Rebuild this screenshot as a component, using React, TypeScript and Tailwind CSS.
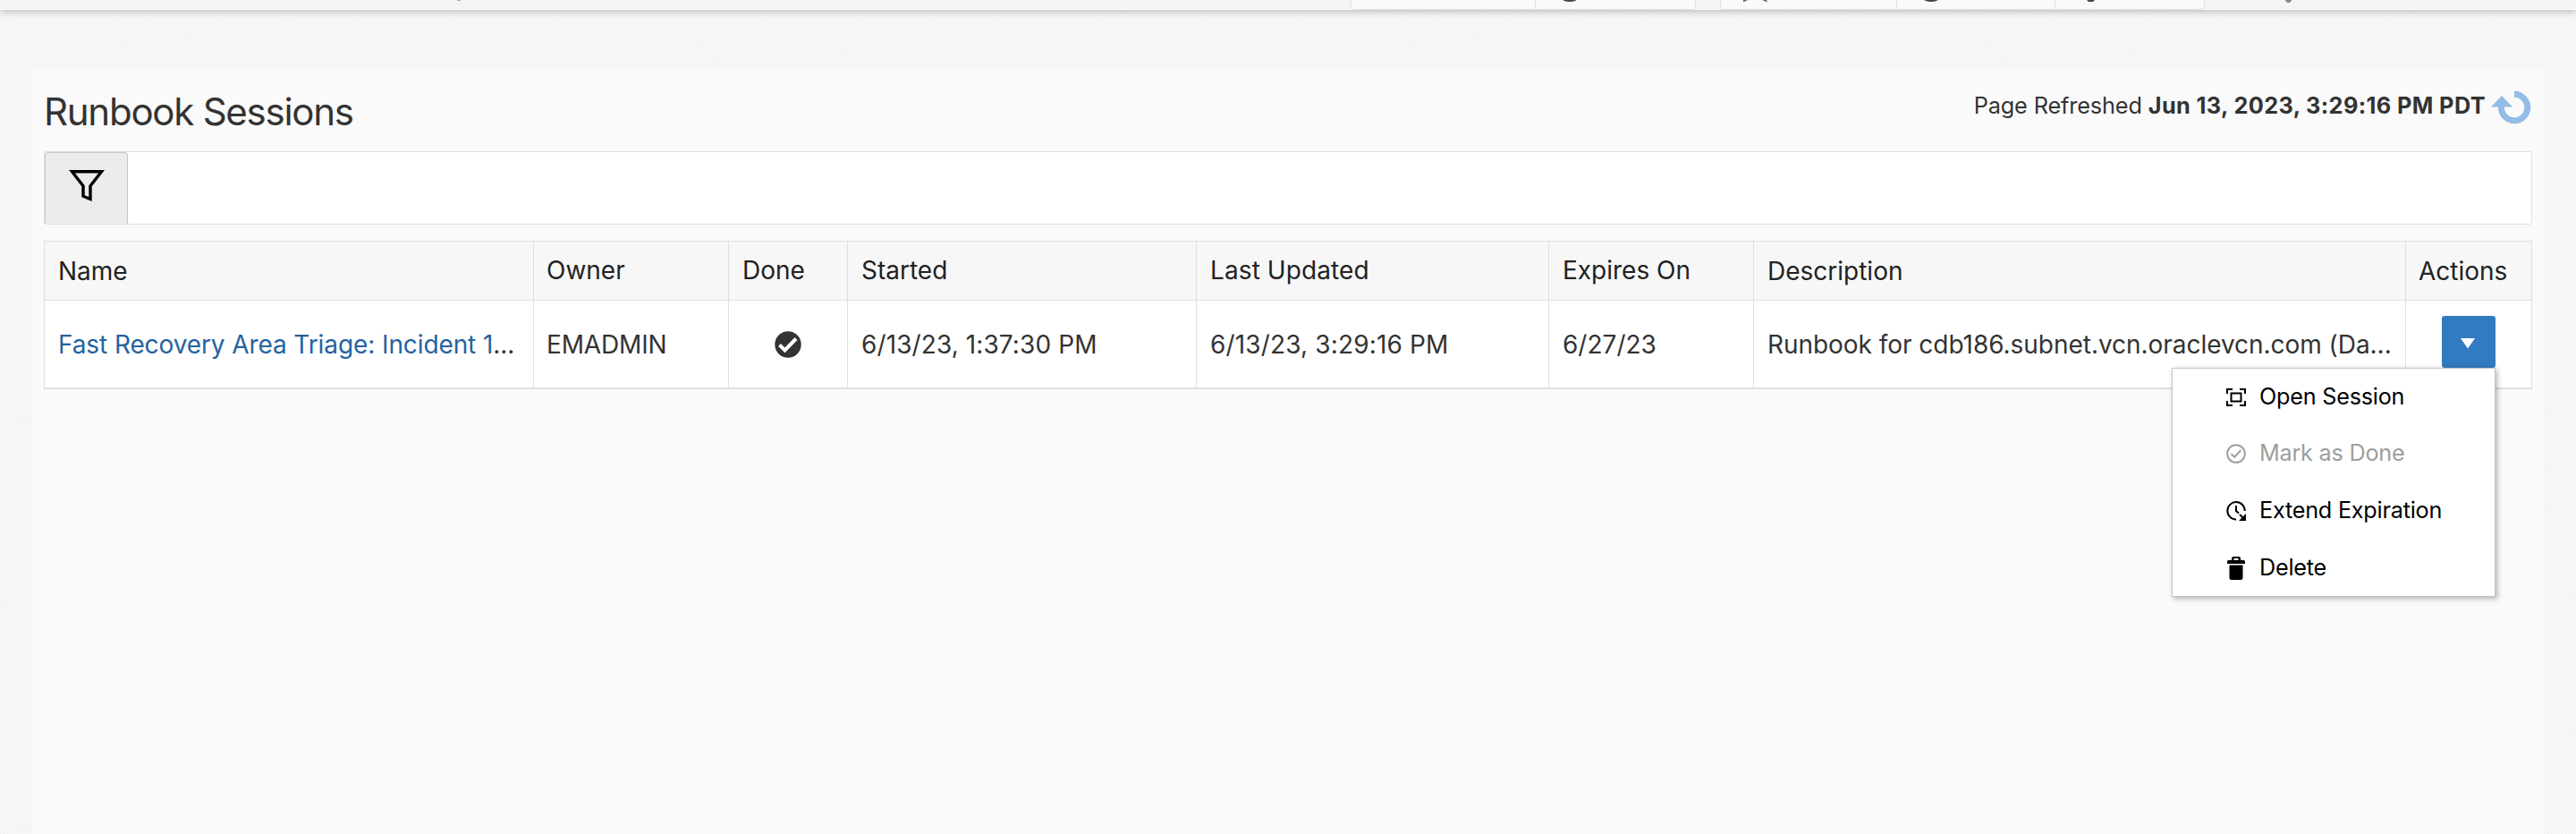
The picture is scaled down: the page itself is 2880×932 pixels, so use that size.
import React from "react";

const cell = "flex items-center border-r border-[#dfdfdf] px-[15px] whitespace-nowrap";
const cols = "grid grid-cols-[547px_218px_133px_390px_394px_229px_729px_140px]";

function MenuItem({ icon, label, muted }: { icon: React.ReactNode; label: string; muted?: boolean }) {
  return (
    <div className={"flex h-[63.6px] items-center pl-[60px] text-[25.2px] tracking-[-0.22px] " + (muted ? "text-[#9e9e9e]" : "text-black")}>
      <span className="flex w-[37px] items-center">{icon}</span>
      {label}
    </div>
  );
}

export default function App() {
  return (
    <div className="h-[932px] w-[2880px] overflow-hidden bg-[linear-gradient(45deg,#f3f3f3_25%,#f9f9f9_25%,#f9f9f9_50%,#f3f3f3_50%,#f3f3f3_75%,#f9f9f9_75%)] bg-[length:4px_4px] font-['Inter',sans-serif] text-[#333]">
      <header className="relative flex h-[11px] border-b border-white bg-[#f4f4f4] pl-[1510px] shadow-[0_2px_8px_rgba(0,0,0,0.25)]">
        <div className="h-[11px] w-[207px] shrink-0 rounded-bl-[5px] border-x border-b border-[#dfe3e3] bg-[#fafafa]" />
        <div className="h-[11px] w-[179px] shrink-0 rounded-br-[5px] border-r border-b border-[#dfe3e3] bg-[#fafafa]" />
        <div className="ml-[27px] h-[11px] w-[198px] shrink-0 rounded-br-[3px] border-x border-b border-[#dfe3e3] bg-[#fafafa]" />
        <div className="h-[11px] w-[177px] shrink-0 rounded-br-[4px] border-r border-b border-[#dfe3e3] bg-[#fafafa]" />
        <div className="h-[11px] w-[167px] shrink-0 rounded-br-[5px] border-r border-b border-[#dfe3e3] bg-[#fafafa]" />
        <svg className="absolute top-0 left-0" width="2880" height="10" viewBox="0 0 2880 10">
          <g fill="#444">
            <circle cx="1755" cy="-15" r="17" />
            <circle cx="2159" cy="-15" r="17" />
            <path d="M2333 0h9l-2 2h-5z" />
          </g>
          <path d="M1949 0h5l-5 2.500zM1970 0h5l1 2.500z" fill="#666" />
          <path d="M2554.500 0h8l-2.500 3h-3z" fill="#8a8a8a" />
          <path d="M511 0h4v1h-4z" fill="#aaa" />
        </svg>
      </header>

      <main className="mx-[36px] mt-[65px] h-[856px] bg-[#fafafa] pr-[13px] pl-[13px]">
        <div className="flex h-[93px] items-start justify-between">
          <h1 className="pt-[22px] text-[42px] leading-[54px] tracking-[-1.25px]">Runbook Sessions</h1>
          <div className="flex items-center pt-[21px] text-[25.3px] leading-[40px]">
            <span className="tracking-[-0.15px]">Page Refreshed <b className="font-bold tracking-[0.38px]">Jun 13, 2023, 3:29:16 PM PDT</b></span>
            <svg className="ml-[6px]" width="46" height="42" viewBox="0 0 46 42">
              <path d="M26 8.300a14.700 14.700 0 1 1-14.500 12.700" fill="none" stroke="#93bce6" strokeWidth="7" />
              <path d="M0 22.500 12 10 24 22.500z" fill="#93bce6" />
            </svg>
          </div>
        </div>

        <div className="flex h-[82px] w-[2782px] rounded-[3px] border border-[#dfdfdf] bg-white">
          <button className="flex w-[93px] justify-center rounded-t-[4px] border border-b-0 border-[#c8c8c8] bg-[#ececec] pt-[19px]">
            <svg width="40" height="36" viewBox="0 0 40 36" fill="none" stroke="#000" strokeWidth="3.4">
              <path d="M3.500 1.700h33L24 17.800v14.700L16 29.200V17.800z" />
            </svg>
          </button>
        </div>

        <section className="mt-[18px] w-[2782px] border border-b-2 border-[#dfdfdf] text-[28px]">
          <div className={cols + " h-[66px] border-b border-[#dfdfdf] bg-[#f7f7f7] text-[#222]"}>
            <div className={cell}>Name</div>
            <div className={cell + " pb-[2px]"}><span className="-ml-px">Owner</span></div>
            <div className={cell + " pb-[2px]"}>Done</div>
            <div className={cell + " pb-[2px]"}>Started</div>
            <div className={cell + " pb-[2px] tracking-[0.1px]"}>Last Updated</div>
            <div className={cell + " pb-[2px]"}>Expires On</div>
            <div className={cell}>Description</div>
            <div className="flex items-center pl-[14px]">Actions</div>
          </div>
          <div className={cols + " h-[97px] bg-white"}>
            <div className={cell + " tracking-[-0.1px]"}><span className="text-[#24639f]">Fast Recovery Area Triage: Incident 1</span>...</div>
            <div className={cell + " tracking-[-0.15px]"}><span className="-ml-px">EMADMIN</span></div>
            <div className={cell + " justify-center"}>
              <svg width="30" height="30" viewBox="0 0 30 30">
                <circle cx="15" cy="15" r="14.7" fill="#333" />
                <path d="M5.500 15.500l6 6L24 8.500" fill="none" stroke="#fff" strokeWidth="4" />
              </svg>
            </div>
            <div className={cell + " tracking-[0.1px]"}>6/13/23, 1:37:30 PM</div>
            <div className={cell + " tracking-[0.15px]"}>6/13/23, 3:29:16 PM</div>
            <div className={cell}>6/27/23</div>
            <div className={cell + " tracking-[-0.04px]"}>Runbook for cdb186.subnet.vcn.oraclevcn.com (Da...</div>
            <div className="relative pt-[17px] pl-[40px]">
              <button className="flex h-[58px] w-[60px] items-center justify-center rounded-[3px] bg-[#327bc0] pt-[3px] pr-[2px]">
                <svg width="16" height="12" viewBox="0 0 16 12"><path d="M0 0h16L8 11.500z" fill="#fff" /></svg>
              </button>
              <div className="absolute top-[75px] right-[40px] z-10 h-[256px] w-[362px] border border-[#c4c4c4] bg-white shadow-[2px_2px_6px_rgba(0,0,0,0.3)]">
                <MenuItem label="Open Session" icon={
                  <svg width="22" height="20" viewBox="0 0 22 20" fill="none" stroke="currentColor" strokeWidth="2">
                    <path d="M1 6V1h6M15 1h6v5M21 14v5h-6M7 19H1v-5M5.500 5.500h11v9h-11z" />
                  </svg>} />
                <MenuItem muted label="Mark as Done" icon={
                  <svg width="22" height="22" viewBox="0 0 22 22" fill="none" stroke="currentColor" strokeWidth="2">
                    <circle cx="11" cy="11" r="9.8" /><path d="M5.500 11.200l3.700 3.600 7-7.500" />
                  </svg>} />
                <MenuItem label="Extend Expiration" icon={
                  <svg width="22" height="22" viewBox="0 0 22 22" fill="none" stroke="currentColor" strokeWidth="2">
                    <path d="M11 20.500A9.700 9.700 0 1 1 20.700 11M11 5v6l3 2.500M15 15l5 5" />
                    <path d="M22 14v8h-8z" fill="currentColor" stroke="none" />
                  </svg>} />
                <MenuItem label="Delete" icon={
                  <svg className="ml-[1px]" width="20" height="26" viewBox="0 0 20 26" fill="currentColor">
                    <path d="M0 8V5.500Q0 4 1.500 4H5V2q0-2 2-2h6q2 0 2 2v2h3.500Q20 4 20 5.500V8zM7.500 4h5V2h-5zM2.500 9.500h15V24q0 2-2 2h-11q-2 0-2-2z" fillRule="evenodd" />
                  </svg>} />
              </div>
            </div>
          </div>
        </section>
      </main>
    </div>
  );
}
